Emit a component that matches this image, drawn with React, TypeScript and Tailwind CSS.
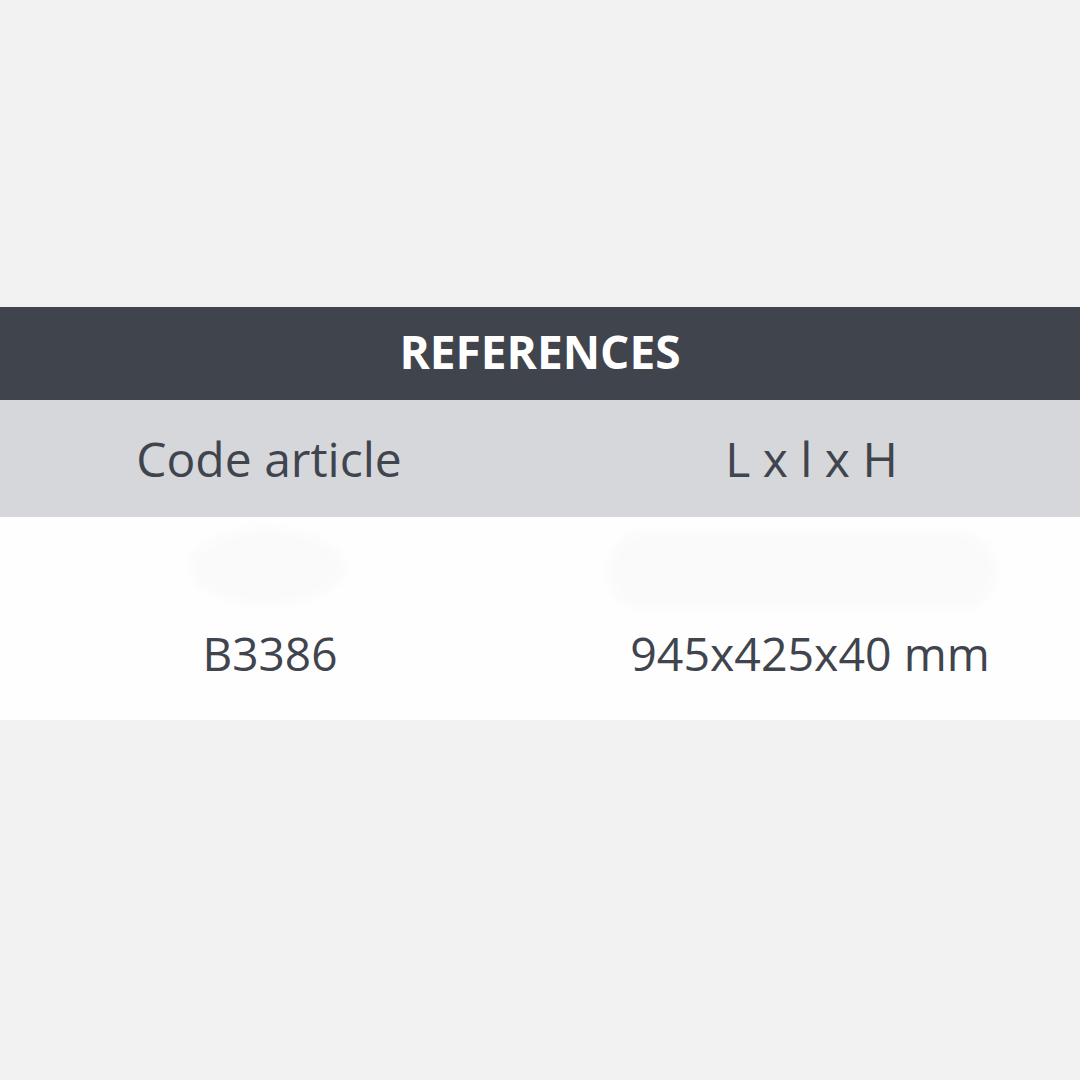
export default function App() {
    const font = { fontFamily: '"Open Sans", "Noto Sans", sans-serif' };

    return (
        <div className="min-h-[1080px] w-[1080px] bg-[#f2f2f2] flex flex-col" style={font}>
            <div className="h-[307px]" />

            {/* Title bar */}
            <div className="h-[93px] bg-[#40444d] flex items-center justify-center pb-[5px]">
                <h1 className="text-[46px] font-bold text-white leading-none">REFERENCES</h1>
            </div>

            {/* Column headings */}
            <div className="h-[117px] bg-[#d5d7db] grid grid-cols-2">
                <div className="flex items-center justify-center text-[48px] text-[#40444d] leading-none pr-[2px]">Code article</div>
                <div className="flex items-center justify-center text-[48px] text-[#40444d] leading-none pl-[3px]">L x l x H</div>
            </div>

            {/* Values */}
            <div className="h-[203px] bg-[#fefefe] grid grid-cols-2 overflow-hidden">
                <div className="flex flex-col items-center pt-[10px]">
                    <div className="h-[80px] w-[158px] rounded-[50%] bg-[#f9f9f9] blur-[3px] opacity-60 ml-[-6px]" />
                    <div className="mt-[23px] text-[46px] text-[#40444d] leading-none">B3386</div>
                </div>
                <div className="flex flex-col items-center pt-[13px]">
                    <div className="h-[82px] w-[392px] rounded-full bg-[#f9f9f9] blur-[3px] opacity-60 ml-[-16px]" />
                    <div className="mt-[18px] text-[46.5px] text-[#40444d] leading-none">945x425x40 mm</div>
                </div>
            </div>
        </div>
    );
}
